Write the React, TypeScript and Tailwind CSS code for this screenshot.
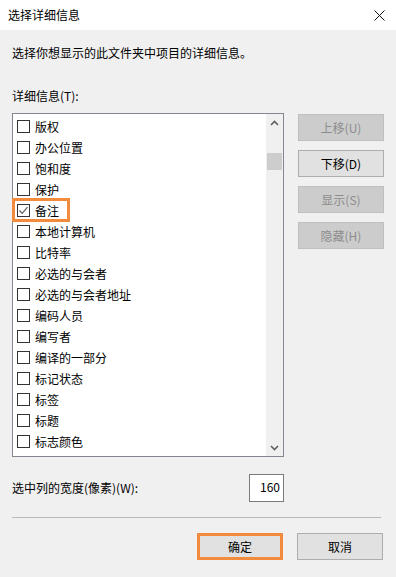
const items = [
  '版权',
  '办公位置',
  '饱和度',
  '保护',
  '备注',
  '本地计算机',
  '比特率',
  '必选的与会者',
  '必选的与会者地址',
  '编码人员',
  '编写者',
  '编译的一部分',
  '标记状态',
  '标签',
  '标题',
  '标志颜色',
]

const checked = '备注'

function CheckBox({ on }: { on: boolean }) {
  return (
    <span className="flex h-[13px] w-[13px] shrink-0 items-center justify-center border border-[#333333] bg-white">
      {on && (
        <svg width="11" height="11" viewBox="0 0 11 11" fill="none">
          <path d="M1.5 5.5 L4.2 8.3 L9.5 2.2" stroke="#5a5a5a" strokeWidth="1.2" />
        </svg>
      )}
    </span>
  )
}

function SideButton({ label, enabled = false }: { label: string; enabled?: boolean }) {
  return (
    <div
      className={
        enabled
          ? 'flex h-[27px] w-[86px] items-center justify-center border border-[#adadad] bg-[#e1e1e1] text-black'
          : 'flex h-[27px] w-[86px] items-center justify-center border border-[#bfbfbf] bg-[#cccccc] text-[#8c8c8c]'
      }
    >
      {label}
    </div>
  )
}

export default function App() {
  return (
    <div
      className="flex h-[577px] w-[396px] flex-col overflow-hidden bg-[#f0f0f0] text-[12px] leading-[16px] text-black"
      style={{ fontFamily: '"Noto Sans CJK SC", "Noto Sans", sans-serif' }}
    >
      {/* title bar */}
      <div className="flex h-[30px] shrink-0 items-center justify-between bg-white pl-[8px] pr-[10px]">
        <span className="text-[12px]">选择详细信息</span>
        <svg width="11" height="11" viewBox="0 0 11 11" className="mr-[1px]">
          <path d="M0.5 0.5 L10.5 10.5 M10.5 0.5 L0.5 10.5" stroke="#111" strokeWidth="1" />
        </svg>
      </div>

      <div className="flex flex-1 flex-col px-[12px]">
        <p className="mt-[15px]">选择你想显示的此文件夹中项目的详细信息。</p>
        <p className="mt-[27px]">详细信息(T):</p>

        <div className="mt-[9px] flex items-start gap-[14px]">
          {/* list box */}
          <div className="flex h-[344px] w-[272px] border border-[#828790] bg-white">
            <div className="flex-1 pt-[2px]">
              {items.map((name) => (
                <div key={name} className="relative flex h-[21px] items-center pl-[4px]">
                  <CheckBox on={name === checked} />
                  <span className="ml-[5px] whitespace-nowrap">{name}</span>
                  {name === checked && (
                    <span className="absolute left-[-1px] top-[-2px] h-[24px] w-[58px] border-[3px] border-[#f28b3c]" />
                  )}
                </div>
              ))}
            </div>
            {/* scrollbar */}
            <div className="flex w-[17px] flex-col bg-[#f0f0f0]">
              <div className="flex h-[17px] items-center justify-center">
                <svg width="9" height="6" viewBox="0 0 9 6">
                  <path d="M1 5 L4.5 1.5 L8 5" stroke="#606060" strokeWidth="1.6" fill="none" />
                </svg>
              </div>
              <div className="ml-[1px] mt-[22px] h-[17px] w-[15px] bg-[#cdcdcd]" />
              <div className="flex-1" />
              <div className="flex h-[17px] items-center justify-center">
                <svg width="9" height="6" viewBox="0 0 9 6">
                  <path d="M1 1 L4.5 4.5 L8 1" stroke="#606060" strokeWidth="1.6" fill="none" />
                </svg>
              </div>
            </div>
          </div>

          {/* side buttons */}
          <div className="mt-[1px] flex flex-col gap-[9px]">
            <SideButton label="上移(U)" />
            <SideButton label="下移(D)" enabled />
            <SideButton label="显示(S)" />
            <SideButton label="隐藏(H)" />
          </div>
        </div>

        {/* width row */}
        <div className="mt-[17px] flex w-[272px] items-center justify-between">
          <span>选中列的宽度(像素)(W):</span>
          <div className="flex h-[28px] w-[35px] items-start justify-end border border-[#7a7a7a] bg-white pr-[3px] pt-[4px]">
            160
          </div>
        </div>

        <div className="mt-[15px] h-px w-[369px] bg-[#b9b9b9]" />

        <div className="mt-[15px] flex w-[371px] justify-end gap-[14px]">
          <div className="flex h-[27px] w-[86px] items-center justify-center border-[3px] border-[#f28b3c] bg-[#e1e1e1]">
            确定
          </div>
          <div className="flex h-[27px] w-[86px] items-center justify-center border border-[#adadad] bg-[#e1e1e1]">
            取消
          </div>
        </div>
      </div>
    </div>
  )
}
